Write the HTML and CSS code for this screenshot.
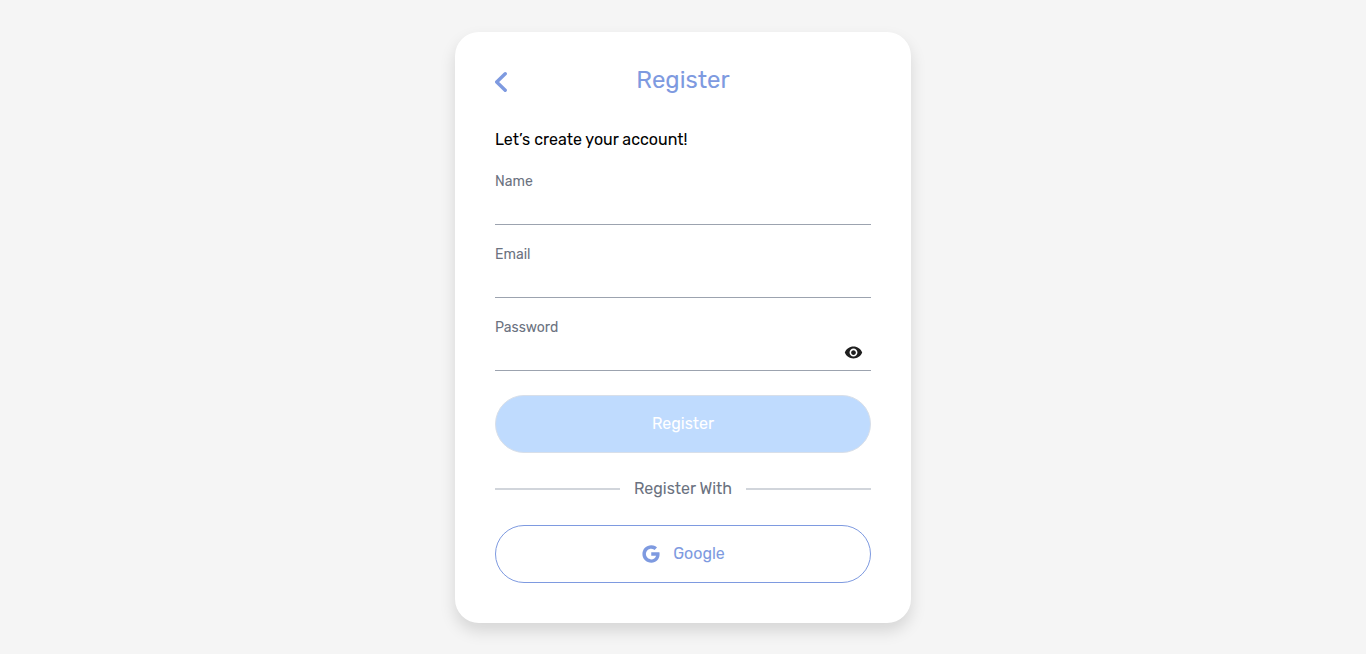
FILE: index.html
```html
<!DOCTYPE html>
<html lang="en">
<head>
<meta charset="utf-8">
<meta name="viewport" content="width=device-width, initial-scale=1">
<title>Register</title>
<link rel="stylesheet" href="styles.css">
</head>
<body>
<main class="card">
  <header class="card-header">
    <a class="back" href="#" aria-label="Back">
      <svg width="12" height="20" viewBox="0 0 12 20" fill="none" stroke="currentColor" stroke-width="3.400" stroke-linecap="round" stroke-linejoin="round"><path d="M10.200 1.800 1.700 10l8.500 8.200"/></svg>
    </a>
    <h1 class="title">Register</h1>
  </header>
  <form class="form">
    <p class="intro">Let’s create your account!</p>
    <div class="field">
      <label class="label" for="name">Name</label>
      <input class="input" id="name" type="text">
    </div>
    <div class="field">
      <label class="label" for="email">Email</label>
      <input class="input" id="email" type="email">
    </div>
    <div class="field">
      <label class="label" for="password">Password</label>
      <div class="password-row">
        <input class="input" id="password" type="password">
        <button class="reveal" type="button" aria-label="Show password">
          <svg width="19" height="19" viewBox="0 0 24 24" fill="currentColor"><path d="M12 4.500C7 4.500 2.730 7.610 1 12c1.730 4.390 6 7.500 11 7.500s9.270-3.110 11-7.500c-1.730-4.390-6-7.500-11-7.500zM12 17c-2.760 0-5-2.240-5-5s2.240-5 5-5 5 2.240 5 5-2.240 5-5 5zm0-8c-1.660 0-3 1.340-3 3s1.340 3 3 3 3-1.340 3-3-1.340-3-3-3z"/></svg>
        </button>
      </div>
    </div>
    <button class="button submit" type="submit" disabled>Register</button>
  </form>
  <div class="divider">Register With</div>
  <button class="button google" type="button">
    <svg width="20" height="20" viewBox="0 0 512 512" fill="currentColor"><path d="M473.160 221.480l-2.260-9.590H262.460v88.220H387c-12.930 61.400-72.930 93.720-121.940 93.720-35.660 0-73.250-15-98.130-39.110a140.080 140.080 0 0 1-41.800-98.880c0-37.160 16.700-74.330 41-98.780s61-38.130 97.490-38.130c41.790 0 71.740 22.190 82.940 32.310l62.690-62.360C390.860 72.720 340.340 32 261.600 32c-60.750 0-119 23.270-161.580 65.710C58 139.500 36.250 199.930 36.250 256s20.580 113.480 61.300 155.600c43.510 44.920 105.130 68.400 168.580 68.400 57.730 0 112.450-22.620 151.450-63.660 38.340-40.400 58.170-96.300 58.170-154.900 0-24.670-2.480-39.320-2.590-39.960z"/></svg>
    Google
  </button>
</main>
</body>
</html>
```

FILE: styles.css
```css
* {
  box-sizing: border-box;
}

body {
  margin: 0;
  min-height: 100vh;
  display: flex;
  align-items: center;
  justify-content: center;
  background: #f5f5f5;
  color: #000;
  font: 16px/24px Rubik, Roboto, sans-serif;
}

.card {
  width: 100%;
  max-width: 456px;
  padding: 32px 40px 40px;
  border-radius: 24px;
  background: #fff;
  box-shadow: 0 8px 16px rgba(0, 0, 0, 0.13);
}

.card-header {
  display: grid;
  grid-template-columns: 12px 1fr 12px;
  align-items: center;
}

.back {
  display: flex;
  padding-top: 4px;
  color: #7e9ae0;
}

.title {
  margin: 0;
  color: #7e9ae0;
  font-size: 24px;
  font-weight: 400;
  line-height: 32px;
  text-align: center;
}

.intro {
  margin: 32px 0 20px;
}

.field {
  margin-bottom: 20px;
}

.label {
  display: block;
  color: #6b7280;
  font-size: 14px;
  line-height: 20px;
}

.input {
  display: block;
  width: 100%;
  height: 33px;
  padding: 0;
  border: 0;
  border-bottom: 1px solid #9ca3af;
  border-radius: 0;
  background: transparent;
  font: inherit;
}

.password-row {
  position: relative;
}

.reveal {
  position: absolute;
  top: 5px;
  right: 8px;
  display: flex;
  padding: 0;
  border: 0;
  background: none;
  color: #1f1f1f;
}

.button {
  display: flex;
  align-items: center;
  justify-content: center;
  gap: 12px;
  width: 100%;
  height: 58px;
  border: 1px solid;
  border-radius: 29px;
  font: inherit;
}

.submit {
  margin-top: 24px;
  border-color: #d8dfe9;
  background: #bfdbfe;
  color: #fff;
}

.divider {
  display: flex;
  align-items: center;
  gap: 14px;
  margin: 24px 0;
  color: #6b7280;
}

.divider::before,
.divider::after {
  content: "";
  flex: 1;
  height: 2px;
  background: #d1d5db;
}

.google {
  border-color: #7e9ae0;
  background: #fff;
  color: #7e9ae0;
}
```
